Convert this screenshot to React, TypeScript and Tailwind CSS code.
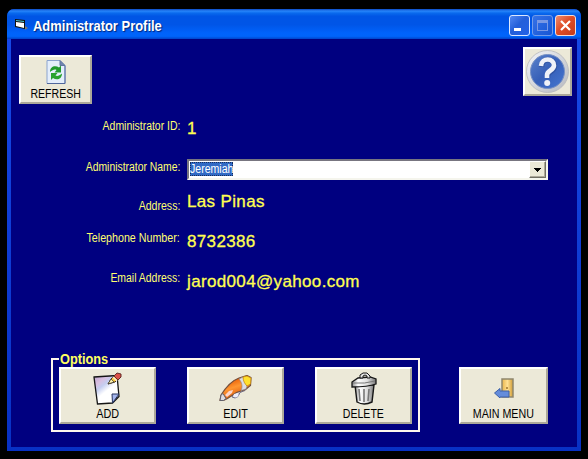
import type { ReactNode } from "react";

const bevel =
  "bg-[#ece9d8] border-2 border-t-white border-l-white border-b-[#aca899] border-r-[#aca899]";

function ActionButton({
  label,
  icon,
  className,
  textClass,
}: {
  label: string;
  icon: ReactNode;
  className: string;
  textClass: string;
}) {
  return (
    <button className={`${bevel} flex shrink-0 flex-col items-center ${className}`}>
      <span className="flex flex-1 items-center justify-center">{icon}</span>
      <span className={`block h-[14px] whitespace-nowrap text-[12px] leading-[14px] text-black ${textClass}`}>{label}</span>
    </button>
  );
}

function Row({
  label,
  labelClass,
  className,
  children,
}: {
  label: string;
  labelClass: string;
  className: string;
  children: ReactNode;
}) {
  return (
    <div className={`flex items-start ${className}`}>
      <div className="flex w-[169px] shrink-0 justify-end">
        <span
          className={`block origin-right whitespace-nowrap text-[12px] leading-[14px] text-[#ffff70] ${labelClass}`}
        >
          {label}
        </span>
      </div>
      <div className="ml-[7px]">{children}</div>
    </div>
  );
}

function Value({ children, className }: { children: ReactNode; className: string }) {
  return (
    <span
      className={`block whitespace-nowrap text-[17px] leading-[20px] tracking-[0.35px] text-[#ffff50] [-webkit-text-stroke:0.3px_#ffff50] ${className}`}
    >
      {children}
    </span>
  );
}

function RefreshIcon() {
  return (
    <svg width="20" height="24" viewBox="0 0 20 24">
      <path d="M1 .5h13l5 5v18H1z" fill="#e4eefb" stroke="#8ba3cf" />
      <path d="M1 23.5h18V6" fill="none" stroke="#50679c" />
      <path d="M14 .5v5h5z" fill="#7186ae" stroke="#60759f" />
      <path d="M4 12c0-6 5.500-7 9-4.500l2-2v7H8.500l2-2.500c-2-1-4 0-6.500 2z" fill="#219a2d" />
      <path d="M16 13.500c0 6-5.500 7-9 4.500l-2 2v-7h6.500l-2 2.500c2 1 4 0 6.500-2z" fill="#2aa32e" />
    </svg>
  );
}

function HelpIcon() {
  return (
    <svg width="43" height="43" viewBox="0 0 43 43">
      <defs>
        <linearGradient id="ring" x1="0" y1="0" x2="1" y2="1">
          <stop stopColor="#f5f6f9" />
          <stop offset="1" stopColor="#b5b8bf" />
        </linearGradient>
        <linearGradient id="disc" x1="0" y1="0" x2="1" y2="1">
          <stop stopColor="#5c83cb" />
          <stop offset=".5" stopColor="#365fb8" />
          <stop offset="1" stopColor="#4677d2" />
        </linearGradient>
      </defs>
      <circle cx="21.5" cy="21.5" r="21" fill="url(#ring)" stroke="#b8b9bb" strokeWidth=".8" />
      <circle cx="21.5" cy="21.5" r="17" fill="url(#disc)" stroke="#7891c4" />
      <path d="M15.500 17c.5-10 13.500-9 13-.5-.3 5-7 5-7 9.500v2" fill="none" stroke="#3155a4" strokeWidth="5.5" />
      <path d="M15 16c.5-9 13.500-8 13-.5-.3 5-7 5-7 9.500v3" fill="none" stroke="#eff1f8" strokeWidth="4.6" />
      <circle cx="21.200" cy="33" r="3" fill="#eff1f8" />
    </svg>
  );
}

function AddIcon() {
  return (
    <svg width="29" height="33" viewBox="0 0 29 33">
      <defs>
        <linearGradient id="sheet" x1="0" y1="0" x2=".7" y2="1">
          <stop stopColor="#b8a1cf" />
          <stop offset=".25" stopColor="#d9bfe0" />
          <stop offset=".4" stopColor="#c4cdf0" />
          <stop offset=".6" stopColor="#fff" />
        </linearGradient>
      </defs>
      <path d="M1 5 24 3.5l2 21-6.5 6.5-15 1z" fill="url(#sheet)" stroke="#151515" strokeWidth="1.3" />
      <path d="m26 22-7 0 .5 9z" fill="#a4b5ec" stroke="#26345f" />
      <path d="m15 12 3-5 5-5 4 3-5 5z" fill="#f8c635" stroke="#493116" />
      <path d="m15 12 3-5 3 3z" fill="#fff4b0" stroke="#333" strokeWidth=".7" />
      <path d="m21 4 3-3 4 1v3l-3 3z" fill="#db5149" stroke="#642d29" />
      <path d="m20 5 4 4" stroke="#f8e8d5" strokeWidth="1.5" />
    </svg>
  );
}

function EditIcon() {
  return (
    <svg width="33" height="27" viewBox="0 0 33 27">
      <defs>
        <linearGradient id="pen" x1=".3" y1=".2" x2=".6" y2=".9">
          <stop stopColor="#e85f08" />
          <stop offset=".4" stopColor="#ff9630" />
          <stop offset="1" stopColor="#d9540a" />
        </linearGradient>
      </defs>
      <path d="m14 20 8-6 5 0-1 1.500-5 2-2 4-3 1.500-3-1z" fill="#c9c9d8" stroke="#70708a" />
      <path d="M1 25.500 2 20C7 12 12 6 20 3l8-2.500 4 2-.500 8-5 4-9 3-9 6-4 2z" fill="url(#pen)" stroke="#74513e" strokeWidth="1.200" />
      <path d="m20 4 4-2 4 9-1 3-5 1.500c2-4 1-8-2-11.500z" fill="#dcdce4" stroke="#85858f" strokeWidth=".6" />
      <path d="m24 2 4-1 4 2-.500 6-3.500 2c-2-2-4-5-4-9z" fill="#ffe02e" stroke="#c98a10" strokeWidth=".8" />
      <path d="m6 20 4-4 4-1-1 3-5 4z" fill="#fbd5cb" />
      <path d="M1 25.500 2 20l2-1.500 3 5-2.500 2z" fill="#dadae0" stroke="#62616c" />
      <path d="m15 19 4-1 .5 3-2.500 1.500-3-1z" fill="#eeeefa" />
    </svg>
  );
}

function TrashIcon() {
  return (
    <svg width="26" height="33" viewBox="0 0 26 33">
      <defs>
        <linearGradient id="can" x1="0" x2="1">
          <stop stopColor="#888" />
          <stop offset=".25" stopColor="#fff" />
          <stop offset=".65" stopColor="#ddd" />
          <stop offset="1" stopColor="#777" />
        </linearGradient>
      </defs>
      <path d="M4 13h19l-2 17q-8 4-15 0z" fill="url(#can)" stroke="#161616" strokeWidth="1.4" />
      <path d="m8 17 1 12m4-12v13m5-13-1 12" fill="none" stroke="#777" strokeWidth="1.6" />
      <path d="M1 10 7 6l12-1 6 2v5q-8 3-24 3z" fill="url(#can)" stroke="#161616" strokeWidth="1.3" />
      <path d="M9 6V3l3-2h4l3 3v2h-3V4l-2-1-2 1v2z" fill="#e3e3e3" stroke="#171717" />
      <path d="M2 11q12 1 22-2" fill="none" stroke="#777" />
    </svg>
  );
}

function ExitIcon() {
  return (
    <svg width="20" height="20" viewBox="0 0 20 20">
      <defs>
        <linearGradient id="door">
          <stop stopColor="#e9b54b" />
          <stop offset=".5" stopColor="#ffe092" />
          <stop offset="1" stopColor="#cf9b36" />
        </linearGradient>
      </defs>
      <path d="M8 1h11v18H8z" fill="url(#door)" stroke="#8f866c" strokeWidth="1.5" />
      <path d="M12 10h2" stroke="#9c752d" strokeWidth="1.5" />
      <path d="m.5 15 5.500-4.500v2.500h9v6H6v1z" fill="#648cdb" stroke="#3a5fa7" />
    </svg>
  );
}

function FormIcon() {
  return (
    <svg width="13" height="11" viewBox="0 0 13 11">
      <path d="M0 0l10 1v9L0 8z" fill="#111" />
      <path d="m1 3 8 1v5L1 7z" fill="#fff" />
      <path d="m1 1 8 1v1L1 2z" fill="#52c7d0" />
      <path d="m10 7 3 2-3 2z" fill="#777" />
    </svg>
  );
}

export default function App() {
  return (
    <main className="h-[459px] w-[588px] overflow-hidden bg-black pl-[7px] pt-[9px] font-['Liberation_Sans',Arial,sans-serif]">
      <section className="flex h-[442px] w-[574px] flex-col overflow-hidden rounded-t-[7px] bg-[#0831d9]">
        <header className="flex h-[30px] shrink-0 items-center bg-[linear-gradient(180deg,#0b49c4_0%,#2684fa_7%,#0969ed_14%,#0055e5_24%,#0055e7_52%,#0063fb_80%,#0064fa_91%,#0044c9_100%)] pl-[8px] pr-[5px]">
          <FormIcon />
          <h1 className="ml-[5px] mt-[3px] origin-left scale-x-[0.925] whitespace-nowrap text-[14px] font-bold leading-[18px] text-white [text-shadow:1px_1px_1px_#002577]">
            Administrator Profile
          </h1>
          <div className="ml-auto mt-[3px] flex gap-[2px]">
            <button className="flex h-[21px] w-[21px] items-end rounded-[3px] border border-[#dce8ff] bg-[linear-gradient(135deg,#5288f2,#245fd9_45%,#2361e8)] pb-[4px] pl-[4px]">
              <span className="block h-[3px] w-[7px] bg-white" />
            </button>
            <button className="flex h-[21px] w-[21px] items-center justify-center rounded-[3px] border border-[#729ce9] bg-[linear-gradient(135deg,#3572e7,#1755d4)]">
              <span className="block h-[11px] w-[11px] border border-t-[3px] border-[#7998e4]" />
            </button>
            <button className="flex h-[21px] w-[21px] items-center justify-center rounded-[3px] border border-[#f5dcd6] bg-[linear-gradient(135deg,#ed8b6e,#df4d27_45%,#c43b1b)]">
              <svg width="13" height="13" viewBox="0 0 13 13">
                <path d="m2 2 9 9m0-9-9 9" stroke="white" strokeWidth="2.2" />
              </svg>
            </button>
          </div>
        </header>

        <div className="h-[412px] w-[574px] bg-[linear-gradient(180deg,#1648e6,#0831c4)] px-[4px] pb-[4px]">
          <div className="flex h-[408px] flex-col bg-[#000080]">
            <div className="flex items-start justify-between pl-[8px] pr-[5px] pt-[8px]">
              <ActionButton
                label="REFRESH"
                className="mt-[8px] h-[49px] w-[73px] pb-[1px]"
                textClass="scale-x-[0.88]"
                icon={<RefreshIcon />}
              />
              <button className={`${bevel} flex h-[49px] w-[49px] items-center justify-center`} aria-label="Help">
                <HelpIcon />
              </button>
            </div>

            <div className="mt-[15px] h-[193px] shrink-0">
              <Row label="Administrator ID:" className="h-[40px]" labelClass="scale-x-[0.87]">
                <Value className="">1</Value>
              </Row>
              <Row label="Administrator Name:" className="h-[38px]" labelClass="mt-[1px] scale-x-[0.865]">
                <div className="flex h-[21px] w-[361px] border-2 border-b-[#f5f5ed] border-l-[#777580] border-r-[#f5f5ed] border-t-[#777580] bg-white">
                  <div className="my-[1px] ml-[1px] h-[14px] w-[43px] bg-[#316ac5] outline-1 -outline-offset-1 outline-dotted outline-[#172d59]">
                    <span className="block origin-left scale-x-[0.88] whitespace-nowrap text-[12px] leading-[14px] text-white">
                      Jeremiah
                    </span>
                  </div>
                  <div className="ml-auto flex h-[17px] w-[17px] items-center justify-center border border-b-[#716f64] border-l-white border-r-[#716f64] border-t-white bg-[#ece9d8] shadow-[inset_-1px_-1px_#aca899]">
                    <svg width="7" height="4" viewBox="0 0 7 4" shapeRendering="crispEdges">
                      <path d="M0 0h7L3.5 4z" fill="#000" />
                    </svg>
                  </div>
                </div>
              </Row>
              <Row label="Address:" className="h-[36px]" labelClass="mt-[2px] scale-x-[0.88]">
                <Value className="-mt-[5px]">Las Pinas</Value>
              </Row>
              <Row label="Telephone Number:" className="h-[40px]" labelClass="-mt-[2px] scale-x-[0.89]">
                <Value className="-mt-[1px]">8732386</Value>
              </Row>
              <Row label="Email Address:" className="h-[39px]" labelClass="-mt-[2px] scale-x-[0.87]">
                <Value className="-mt-[1px]">jarod004@yahoo.com</Value>
              </Row>
            </div>

            <div className="mt-[39px] flex items-end pl-[40px]">
              <fieldset className="h-[81px] w-[369px] border-2 border-[#fff7ed] px-[6px]">
                <legend className="h-[16px] w-[51px] px-[1px] text-[14px] font-bold leading-[16px] text-[#ffff60]">
                  <span className="block origin-left scale-x-[0.91] whitespace-nowrap">Options</span>
                </legend>
                <div className="flex gap-[31px]">
                  <ActionButton label="ADD" className="h-[57px] w-[97px] pb-[1px]" textClass="scale-x-[0.9]" icon={<AddIcon />} />
                  <ActionButton label="EDIT" className="h-[57px] w-[97px] pb-[1px]" textClass="scale-x-[0.9]" icon={<EditIcon />} />
                  <ActionButton label="DELETE" className="h-[57px] w-[97px] pb-[1px]" textClass="scale-x-[0.88]" icon={<TrashIcon />} />
                </div>
              </fieldset>
              <ActionButton
                label="MAIN MENU"
                className="mb-[8px] ml-[39px] h-[57px] w-[89px] pb-[1px]"
                textClass="scale-x-[0.89]"
                icon={<ExitIcon />}
              />
            </div>
          </div>
        </div>
      </section>
    </main>
  );
}
